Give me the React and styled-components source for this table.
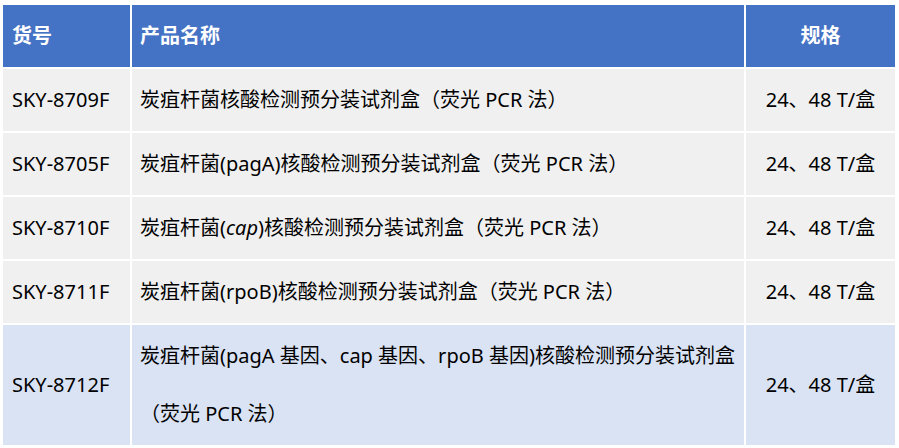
import React from "react";
import styled, { createGlobalStyle } from "styled-components";

const Global = createGlobalStyle`
  html, body { margin: 0; padding: 0; background: #ffffff; }
  body { font-family: "Noto Sans", "Noto Sans CJK SC", sans-serif; }
`;

const Wrap = styled.div`
  padding: 5px 4px 0 3px;
`;

const Table = styled.div`
  display: grid;
  grid-template-columns: 127px 612px 149px;
  gap: 2px;
`;

const Cell = styled.div`
  box-sizing: border-box;
  padding: 2px 8px 2px ${(p) => (p.$first ? "9px" : "8px")};
  min-height: 62px;
  display: flex;
  align-items: center;
  justify-content: ${(p) => (p.$center ? "center" : "flex-start")};
  font-size: 20px;
  line-height: 58px;
  color: #000000;
  background: ${(p) => (p.$alt ? "#DAE3F3" : "#F0F0F0")};
  white-space: nowrap;
`;

const Head = styled(Cell)`
  background: #4472C4;
  color: #ffffff;
  font-weight: 700;
`;

const Em = styled.i`
  font-style: italic;
`;

const rows = [
  { id: "SKY-8709F", name: <>炭疽杆菌核酸检测预分装试剂盒（荧光 PCR 法）</> },
  { id: "SKY-8705F", name: <>炭疽杆菌(pagA)核酸检测预分装试剂盒（荧光 PCR 法）</> },
  { id: "SKY-8710F", name: <>炭疽杆菌(<Em>cap</Em>)核酸检测预分装试剂盒（荧光 PCR 法）</> },
  { id: "SKY-8711F", name: <>炭疽杆菌(rpoB)核酸检测预分装试剂盒（荧光 PCR 法）</> },
  {
    id: "SKY-8712F",
    alt: true,
    name: (
      <span>
        炭疽杆菌(pagA 基因、cap 基因、rpoB 基因)核酸检测预分装试剂盒
        <br />
        （荧光 PCR 法）
      </span>
    ),
  },
];

export default function App() {
  return (
    <>
      <Global />
      <Wrap>
        <Table>
          <Head $first>货号</Head>
          <Head>产品名称</Head>
          <Head $center>规格</Head>
          {rows.map((r) => (
            <React.Fragment key={r.id}>
              <Cell $first $alt={r.alt}>{r.id}</Cell>
              <Cell $alt={r.alt}>{r.name}</Cell>
              <Cell $center $alt={r.alt}>24、48 T/盒</Cell>
            </React.Fragment>
          ))}
        </Table>
      </Wrap>
    </>
  );
}
